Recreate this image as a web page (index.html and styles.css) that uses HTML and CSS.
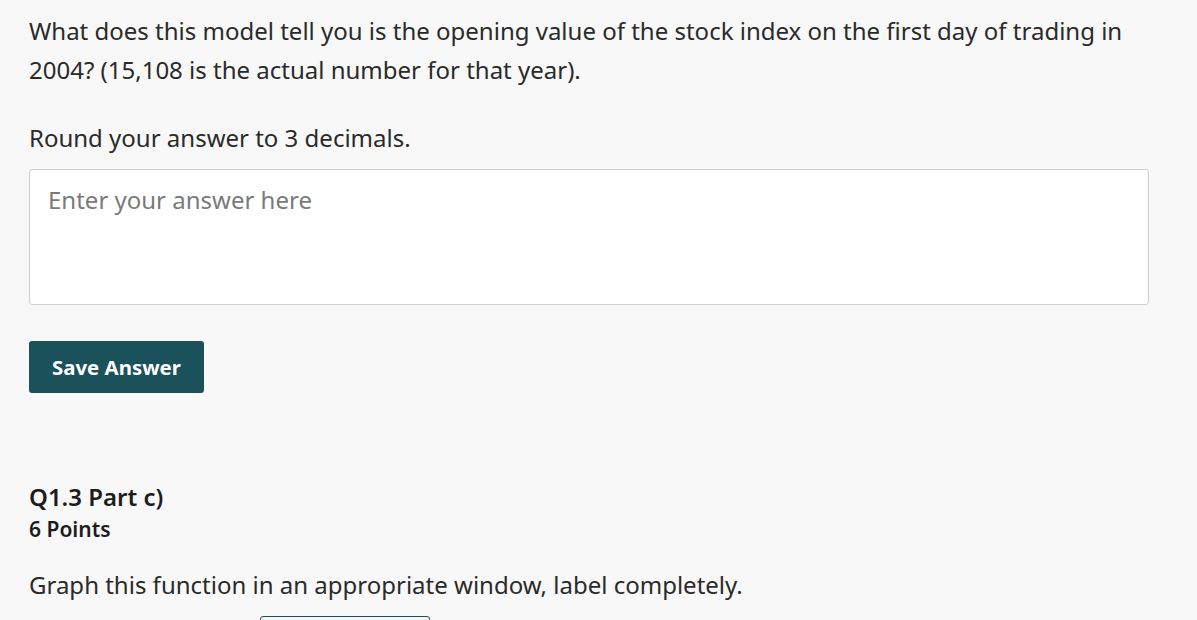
FILE: index.html
```html
<!DOCTYPE html>
<html lang="en">
<head>
<meta charset="utf-8">
<title>Question</title>
<link rel="stylesheet" href="styles.css">
</head>
<body>
<main class="page">
  <section class="question">
    <p class="prompt">What does this model tell you is the opening value of the stock index on the first day of trading in 2004? (15,108 is the actual number for that year).</p>
    <p class="prompt prompt-round">Round your answer to 3 decimals.</p>
    <textarea class="answer" placeholder="Enter your answer here"></textarea>
    <button class="save-btn" type="button">Save Answer</button>
  </section>
  <section class="question question-next">
    <h2 class="q-title">Q1.3 Part c)</h2>
    <div class="q-points">6 Points</div>
    <p class="prompt prompt-graph">Graph this function in an appropriate window, label completely.</p>
    <div class="upload-row">
      <div class="upload-btn"></div>
    </div>
  </section>
</main>
</body>
</html>
```

FILE: styles.css
```css
html, body {
  margin: 0;
  padding: 0;
  background: #f8f8f8;
}
body {
  font-family: "Noto Sans", "Open Sans", sans-serif;
  color: #2a2a2a;
  overflow: hidden;
}
.page {
  padding: 12px 0 0 29px;
  width: 1120px;
}
.question {
  display: flex;
  flex-direction: column;
  align-items: flex-start;
}
.prompt {
  margin: 0;
  font-size: 24px;
  line-height: 38.5px;
}
.prompt-round {
  margin-top: 30px;
}
.answer {
  box-sizing: border-box;
  margin-top: 11.5px;
  width: 1120px;
  height: 136px;
  padding: 12px 18px;
  border: 1px solid #cfcfcf;
  border-radius: 3px;
  background: #fff;
  font-family: inherit;
  font-size: 24px;
  line-height: 36px;
  color: #2a2a2a;
  resize: none;
  outline: none;
}
.answer::placeholder {
  color: #7a7a7a;
  opacity: 1;
}
.save-btn {
  margin-top: 36px;
  height: 52px;
  padding: 0 23px;
  border: none;
  border-radius: 3px;
  background: #1b515a;
  color: #fff;
  font-family: inherit;
  font-weight: 700;
  font-size: 20.4px;
  line-height: 32px;
  cursor: pointer;
}
.question-next {
  margin-top: 89px;
}
.q-title {
  margin: 0;
  font-size: 24px;
  line-height: 30px;
  font-weight: 600;
  color: #1c1c1c;
}
.q-points {
  margin-top: 4px;
  font-size: 21px;
  line-height: 26px;
  font-weight: 600;
  color: #1c1c1c;
}
.prompt-graph {
  margin-top: 24px;
}
.upload-row {
  margin-top: 11px;
  padding-left: 231px;
}
.upload-btn {
  width: 170px;
  height: 40px;
  box-sizing: border-box;
  border: 1px solid #1b515a;
  border-radius: 3px;
}
```
